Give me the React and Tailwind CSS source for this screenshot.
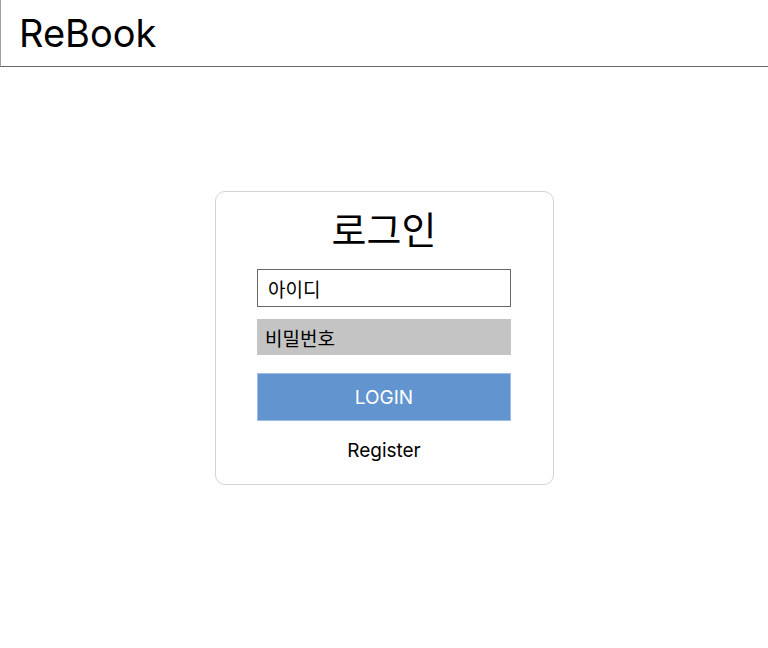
const App = () => {
  return (
    <div className="min-h-[648px] bg-white font-['Inter','Noto_Sans_CJK_KR',sans-serif] text-black">
      {/* Header */}
      <header className="h-[67px] border-l border-l-gray-400 border-b border-b-[#666] flex items-center px-[18px]">
        <h1 className="text-[38px] leading-none">ReBook</h1>
      </header>

      {/* Login card */}
      <main className="flex justify-center pt-[124px]">
        <div className="w-[339px] border border-[#d4d4d4] rounded-[10px] px-[42px] pt-[13px] pb-[19px] flex flex-col items-center">
          <h2 className="text-[38px] leading-[46px] font-['Noto_Sans_CJK_KR',sans-serif]">로그인</h2>
          <input
            type="text"
            placeholder="아이디"
            className="mt-[18px] w-[254px] h-[38px] border border-[#666] px-[10px] text-[19px] placeholder:text-black font-['Noto_Sans_CJK_KR',sans-serif] outline-none"
          />
          <input
            type="password"
            placeholder="비밀번호"
            className="mt-[12px] w-[254px] h-[36px] bg-[#c4c4c4] px-[8px] text-[19px] placeholder:text-black font-['Noto_Sans_CJK_KR',sans-serif] outline-none"
          />
          <button className="mt-[18px] w-[254px] h-[48px] pt-[2px] bg-[#6294d0] border border-[#9dbde6] text-white text-[19px]">
            LOGIN
          </button>
          <a className="mt-[16px] text-[19px] leading-[28px] cursor-pointer">Register</a>
        </div>
      </main>
    </div>
  );
};

export default App;
